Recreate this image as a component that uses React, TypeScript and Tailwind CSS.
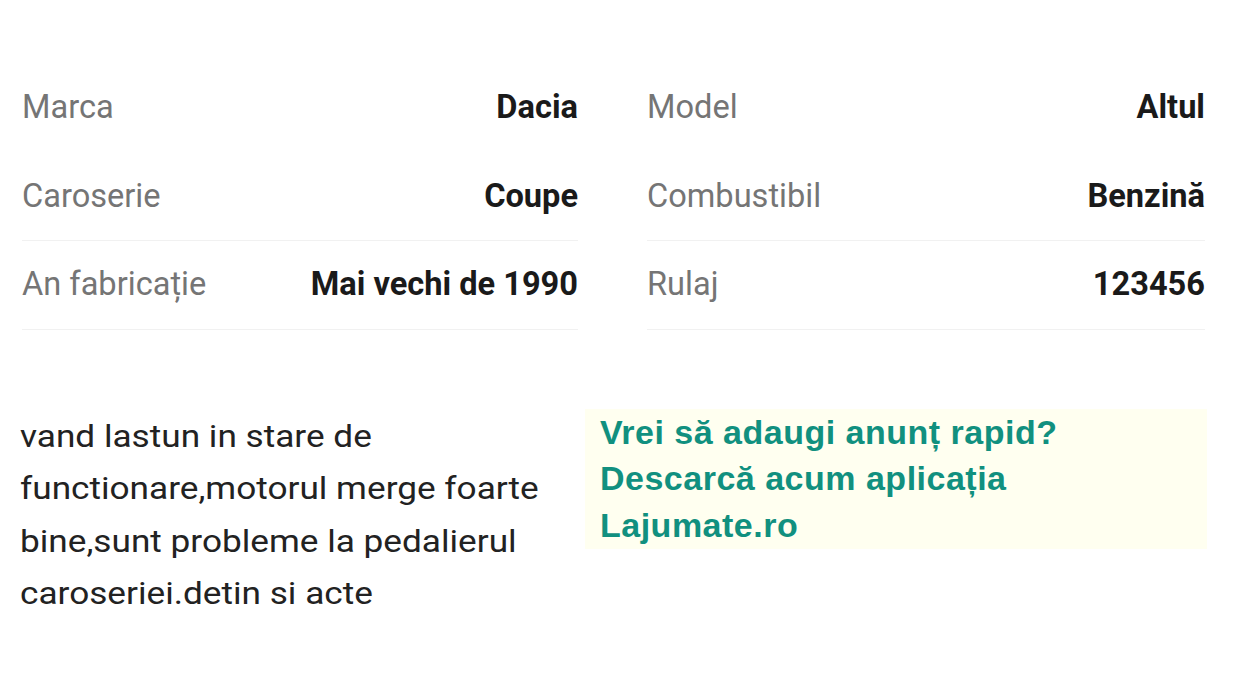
import React from "react";

const rowsLeft = [
  ["Marca", "Dacia"],
  ["Caroserie", "Coupe"],
  ["An fabricație", "Mai vechi de 1990"],
];
const rowsRight = [
  ["Model", "Altul"],
  ["Combustibil", "Benzină"],
  ["Rulaj", "123456"],
];

function Col({ rows }: { rows: string[][] }) {
  return (
    <div className="flex flex-col">
      {rows.map(([k, v], i) => (
        <div
          key={k}
          className={
            "flex h-[88.5px] items-center justify-between border-b " +
            (i === 0 ? "border-transparent" : "border-[#f1f1f1]")
          }
        >
          <span className="text-[#757575]">{k}</span>
          <span className="font-bold text-[#1a1a1a]">{v}</span>
        </div>
      ))}
    </div>
  );
}

export default function App() {
  return (
    <div className="min-h-[700px] w-[1239px] bg-white">
      <div
        className="grid grid-cols-[556px_558px] gap-x-[69px] pl-[22px] pt-[64px] text-[32.6px]"
        style={{ fontFamily: "Roboto, sans-serif" }}
      >
        <Col rows={rowsLeft} />
        <Col rows={rowsRight} />
      </div>
      <div className="mt-[79px] flex pl-[20px]">
        <div className="w-[560px] pt-[2px]">
          <p
            className="w-[495px] origin-left scale-x-[1.135] text-[31px] leading-[52.5px] text-[#222222]"
            style={{ fontFamily: "Roboto, sans-serif" }}
          >
            vand lastun in stare de functionare,motorul merge foarte bine,sunt probleme la pedalierul caroseriei.detin si acte
          </p>
        </div>
        <div
          className="ml-[5px] h-[140px] w-[622px] bg-[#fffff0] px-[15px] text-[34px] font-bold leading-[46.5px] tracking-[0.5px] text-[#11907f]"
          style={{ fontFamily: "'Liberation Sans', Arial, sans-serif" }}
        >
          Vrei să adaugi anunț rapid?
          <br />
          Descarcă acum aplicația
          <br />
          Lajumate.ro
        </div>
      </div>
    </div>
  );
}
